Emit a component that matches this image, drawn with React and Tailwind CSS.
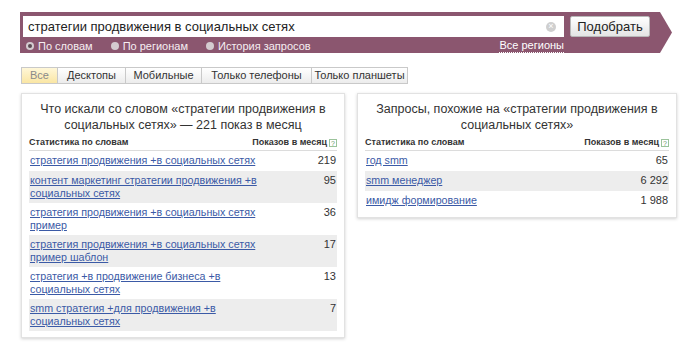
import React from 'react';

const leftRows = [
  ['стратегия продвижения +в социальных сетях', '219'],
  ['контент маркетинг стратегии продвижения +в социальных сетях', '95'],
  ['стратегия продвижения +в социальных сетях пример', '36'],
  ['стратегия продвижения +в социальных сетях пример шаблон', '17'],
  ['стратегия +в продвижение бизнеса +в социальных сетях', '13'],
  ['smm стратегия +для продвижения +в социальных сетях', '7'],
];

const rightRows = [
  ['год smm', '65'],
  ['smm менеджер', '6 292'],
  ['имидж формирование', '1 988'],
];

const tabs = [
  ['Все', 'w-[37px]'],
  ['Десктопы', 'w-[68px]'],
  ['Мобильные', 'w-[76px]'],
  ['Только телефоны', 'w-[110px]'],
  ['Только планшеты', 'w-[96px]'],
];

function Help() {
  return (
    <span className="ml-[2px] inline-flex h-[8px] w-[8px] items-center justify-center border border-[#9bc39b] text-[7px] font-normal leading-none text-[#6a9a6a]">
      ?
    </span>
  );
}

function Radio({ label, checked }) {
  return (
    <div className="flex items-center gap-[4px]">
      <span className="flex h-[8px] w-[8px] items-center justify-center rounded-full bg-[#d4cbd0]">
        {checked && <span className="h-[4px] w-[4px] rounded-full bg-[#5a4a52]" />}
      </span>
      <span className="text-[11px] leading-[14px] text-[#f6eef2]">{label}</span>
    </div>
  );
}

function Panel({ title, rows, width, linkWidth }) {
  return (
    <div className={`${width} border border-[#e2e2e2] bg-white px-[7px] pt-[7px] pb-[6px] shadow-[0_1px_3px_rgba(0,0,0,0.18)]`}>
      <div className="px-[10px] text-center text-[12.5px] leading-[16px] text-[#333]">{title}</div>
      <div className="mt-[3px] flex h-[15px] items-center justify-between border-b border-[#dcdcdc] text-[9px] font-bold text-[#333]">
        <span>Статистика по словам</span>
        <span className="flex items-center">Показов в месяц<Help /></span>
      </div>
      {rows.map(([q, n], i) => (
        <div
          key={q}
          className={`flex min-h-[20px] items-start justify-between px-[1px] py-[3px] ${i % 2 === 1 ? 'bg-[#ededed]' : 'bg-white'}`}
        >
          <a href="#" className={`${linkWidth} text-[10.7px] leading-[13px] text-[#3b5aa6] underline underline-offset-1`}>
            {q}
          </a>
          <span className="text-[11px] leading-[13px] text-[#333]">{n}</span>
        </div>
      ))}
    </div>
  );
}

export default function App() {
  return (
    <div className="h-[356px] w-[700px] overflow-hidden bg-white pt-[12px] font-['Liberation_Sans',Arial,sans-serif]">
      <div className="ml-[20px] h-[41px] w-[652px] bg-[#8b566f] pl-[3px] pt-[4px] [clip-path:polygon(0_0,640px_0,652px_50%,640px_100%,0_100%)]">
        <div className="flex items-center gap-[6px]">
          <div className="flex h-[21px] w-[541px] items-center justify-between bg-white pl-[5px] pr-[8px]">
            <span className="text-[13px] text-[#222]">стратегии продвижения в социальных сетях</span>
            <span className="flex h-[10px] w-[10px] items-center justify-center rounded-full bg-[#cfcfcf] text-[9px] leading-none text-white">×</span>
          </div>
          <button className="h-[21px] w-[80px] rounded-[2px] border border-[#b8b8b8] bg-gradient-to-b from-white to-[#e4e4e4] text-[13px] text-[#222]">
            Подобрать
          </button>
        </div>
        <div className="mt-[2px] flex w-[541px] items-center pl-[3px]">
          <div className="flex items-center gap-[18px]">
            <Radio label="По словам" checked />
            <Radio label="По регионам" />
            <Radio label="История запросов" />
          </div>
          <span className="ml-auto border-b border-dotted border-white text-[11px] leading-[13px] text-white">Все регионы</span>
        </div>
      </div>

      <div className="ml-[21px] mt-[14px] flex h-[17px]">
        {tabs.map(([t, w], i) => (
          <div
            key={t}
            className={`${w} flex items-center justify-center whitespace-nowrap border-y border-r border-[#c9c9c9] text-[11px] ${i === 0 ? 'border-l bg-gradient-to-b from-[#fff7d8] to-[#fae6a4] text-[#8a8a8a]' : 'bg-gradient-to-b from-white to-[#ececec] text-[#333]'}`}
          >
            {t}
          </div>
        ))}
      </div>

      <div className="ml-[21px] mt-[9px] flex items-start gap-[12px]">
        <Panel
          width="w-[324px]"
          linkWidth="w-[228px]"
          title="Что искали со словом «стратегии продвижения в социальных сетях» — 221 показ в месяц"
          rows={leftRows}
        />
        <Panel
          width="w-[320px]"
          linkWidth="w-[228px]"
          title="Запросы, похожие на «стратегии продвижения в социальных сетях»"
          rows={rightRows}
        />
      </div>
    </div>
  );
}
